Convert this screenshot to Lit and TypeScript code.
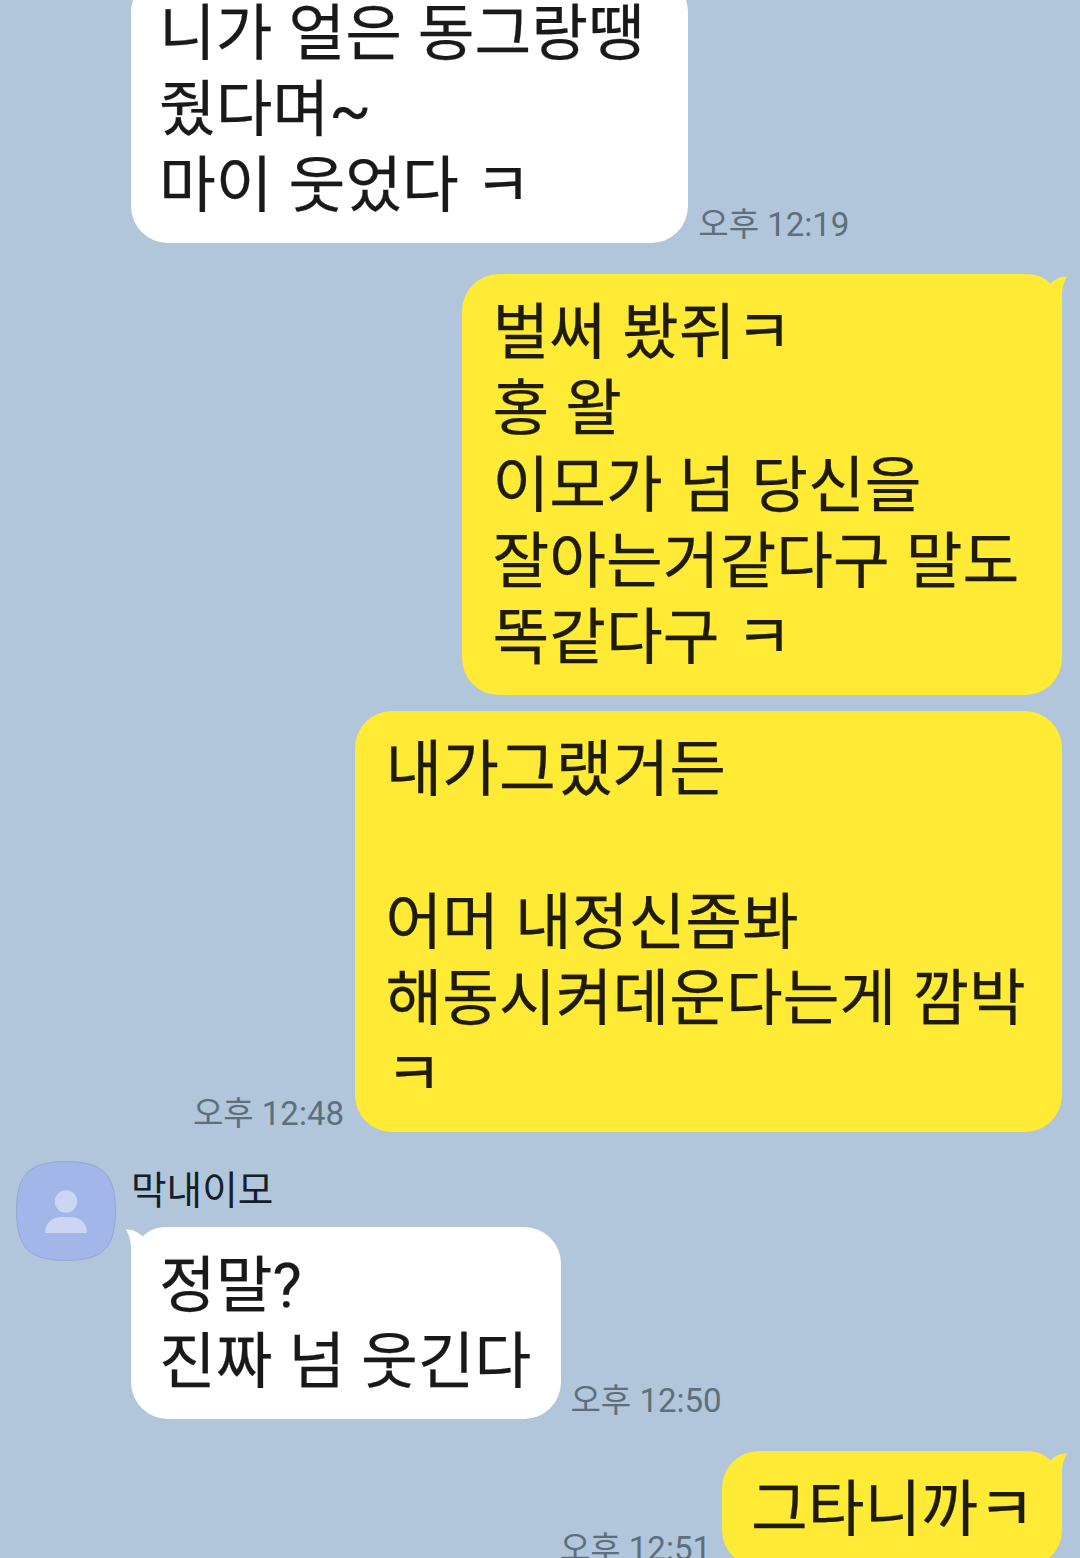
import { LitElement, html, css, nothing } from "lit";
import { customElement, property } from "lit/decorators.js";
import { classMap } from "lit/directives/class-map.js";

interface Message {
  lines: string[];
  size: string;
  time?: string;
  tail?: boolean;
}

interface Group {
  mine: boolean;
  sender?: string;
  messages: Message[];
}

const groups: Group[] = [
  {
    mine: false,
    messages: [
      { lines: ["니가 얼은 동그랑땡", "줬다며~", "마이 웃었다 ㅋ"], size: "w557", time: "오후 12:19" },
    ],
  },
  {
    mine: true,
    messages: [
      {
        lines: ["벌써 봤쥐ㅋ", "홍 왈", "이모가 넘 당신을", "잘아는거같다구 말도", "똑같다구 ㅋ"],
        size: "w600",
        tail: true,
      },
      {
        lines: ["내가그랬거든", "", "어머 내정신좀봐", "해동시켜데운다는게 깜박", "ㅋ"],
        size: "w707",
        time: "오후 12:48",
      },
    ],
  },
  {
    mine: false,
    sender: "막내이모",
    messages: [{ lines: ["정말?", "진짜 넘 웃긴다"], size: "w429", time: "오후 12:50", tail: true }],
  },
  {
    mine: true,
    messages: [{ lines: ["그타니까ㅋ"], size: "w340", time: "오후 12:51", tail: true }],
  },
];

@customElement("chat-bubble")
export class ChatBubble extends LitElement {
  @property({ attribute: false }) message!: Message;
  @property({ type: Boolean, reflect: true }) mine = false;

  static styles = css`
    :host {
      display: flex;
      align-items: flex-end;
      gap: 10px;
    }
    :host([mine]) {
      flex-direction: row-reverse;
      gap: 11px;
    }
    .bubble {
      position: relative;
      box-sizing: border-box;
      flex: none;
      padding: 21px 0 19px 28px;
      border-radius: 37px;
      background: #fff;
      color: #191919;
      font-size: 61.7px;
      line-height: 76.1px;
      word-spacing: 0.6px;
      -webkit-text-stroke: 0.25px currentColor;
    }
    .mine {
      padding-left: 30.5px;
      background: #ffea35;
      color: #1e1c06;
    }
    .line {
      height: 76.1px;
      white-space: pre;
    }
    .w557 { width: 557.3px; }
    .w600 { width: 600px; }
    .w707 { width: 707px; }
    .w429 { width: 429.5px; }
    .w340 { width: 340px; }
    .w340.mine { padding-left: 29px; }
    .tail {
      position: absolute;
      top: 0;
      right: -7px;
      width: 44px;
      height: 40px;
      fill: #ffea35;
    }
    .theirs .tail {
      right: auto;
      left: -7px;
      transform: scaleX(-1);
      fill: #fff;
    }
    .time {
      flex: none;
      color: #5d6f7c;
      font-size: 33px;
      line-height: 37px;
      white-space: pre;
    }
  `;

  render() {
    const { lines, size, time, tail } = this.message;
    const classes = { bubble: true, mine: this.mine, theirs: !this.mine, [size]: true };
    return html`
      <div class=${classMap(classes)}>
        ${tail
          ? html`<svg class="tail" viewBox="0 0 44 40">
              <path d="M3 0.2 C13 0.2 20 4 25.3 9.5 C30 5 36 2.2 42.4 2.2 C39.5 6.5 37 13 37 21 V40 H3Z" />
            </svg>`
          : nothing}
        ${lines.map((line) => html`<div class="line">${line}</div>`)}
      </div>
      ${time ? html`<span class="time">${time}</span>` : nothing}
    `;
  }
}

@customElement("app-root")
export class AppRoot extends LitElement {
  static styles = css`
    :host {
      display: flex;
      flex-direction: column;
      gap: 31.4px;
      box-sizing: border-box;
      height: 1558px;
      overflow: hidden;
      background: #b1c6da;
      font-family: Roboto, "Noto Sans CJK KR", sans-serif;
    }
    .group {
      display: flex;
      flex: none;
      gap: 15px;
      padding: 0 18px 0 16px;
    }
    .group:first-child {
      margin-top: -25.3px;
    }
    .from-me {
      justify-content: flex-end;
    }
    .from-me + .group:not(.from-me) {
      margin-top: -2px;
    }
    .avatar {
      flex: none;
      width: 100px;
      height: 100px;
    }
    .stack {
      display: flex;
      flex-direction: column;
      gap: 16.5px;
    }
    .named {
      gap: 6px;
    }
    .sender {
      height: 60px;
      color: #13202a;
      font-size: 38.7px;
      line-height: 60px;
    }
  `;

  private avatar() {
    return html`<svg class="avatar" viewBox="0 0 100 100">
      <path
        d="M50 .6 C87 .6 99.4 13 99.4 50 S87 99.4 50 99.4 S.6 87 .6 50 S13 .6 50 .6Z"
        fill="#a2b6e9"
        stroke="#92a8d4"
      />
      <circle cx="50" cy="40.5" r="11.2" fill="#cbd6f3" />
      <path d="M29 72 C29 62 36 56 46 56 H54 C64 56 71 62 71 72Z" fill="#cbd6f3" />
    </svg>`;
  }

  render() {
    return groups.map(
      (g) => html`
        <section class=${classMap({ group: true, "from-me": g.mine })}>
          ${g.mine ? nothing : g.sender ? this.avatar() : html`<div class="avatar"></div>`}
          <div class=${classMap({ stack: true, named: !!g.sender })}>
            ${g.sender ? html`<div class="sender">${g.sender}</div>` : nothing}
            ${g.messages.map((m) => html`<chat-bubble .message=${m} ?mine=${g.mine}></chat-bubble>`)}
          </div>
        </section>
      `,
    );
  }
}
